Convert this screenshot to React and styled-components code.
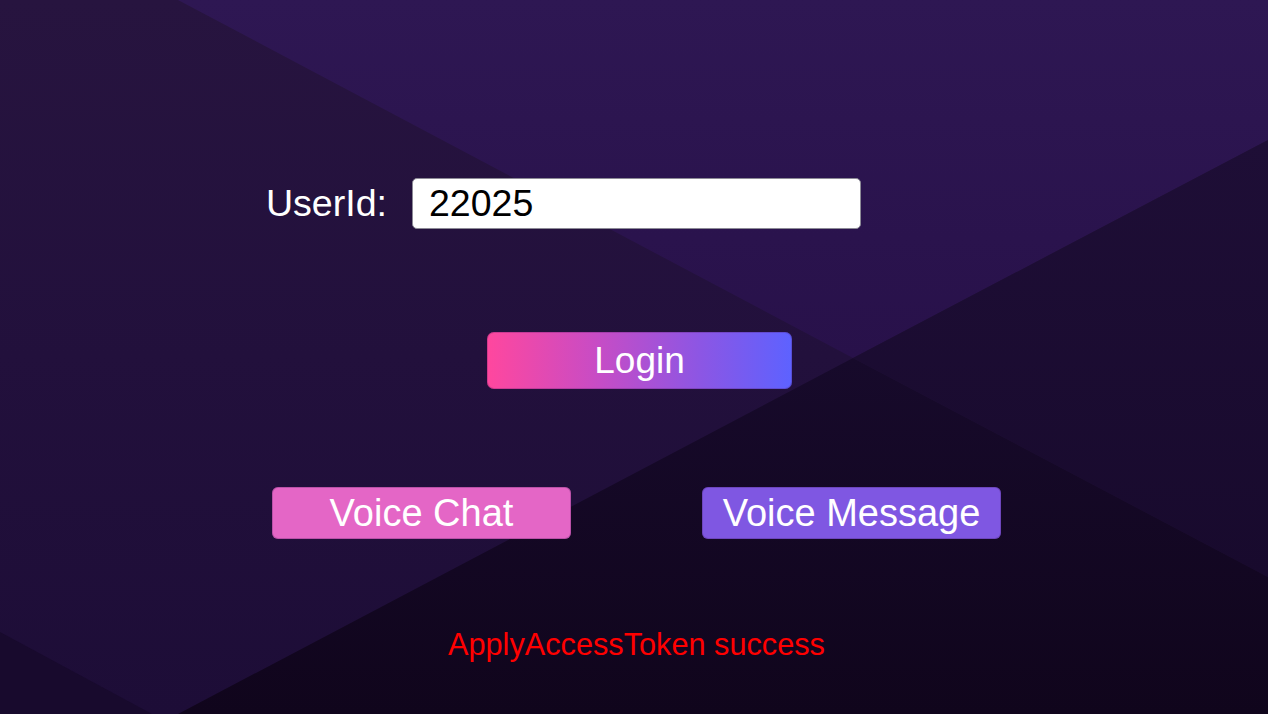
import React from "react";
import styled, { createGlobalStyle } from "styled-components";

const GlobalStyle = createGlobalStyle`
  html, body { margin: 0; padding: 0; }
  body {
    background: #1d0e36;
    font-family: "Liberation Sans", Arial, sans-serif;
    overflow: hidden;
  }
  * { box-sizing: border-box; }
`;

const Stage = styled.div`
  display: grid;
  width: 100vw;
  height: 100vh;
  overflow: hidden;
`;

const Backdrop = styled.svg`
  grid-area: 1 / 1;
  width: 100%;
  height: 100%;
  display: block;
`;

const Content = styled.main`
  grid-area: 1 / 1;
  display: flex;
  flex-direction: column;
  align-items: center;
  padding-top: 178px;
  padding-left: 5px;
  font-family: "Liberation Sans", Arial, sans-serif;
  z-index: 1;
`;

const UserRow = styled.div`
  width: 100%;
  display: grid;
  grid-template-columns: 1fr 449px 1fr;
  align-items: center;
`;

const Label = styled.label`
  justify-self: end;
  margin-right: 25px;
  color: #ffffff;
  font-size: 37.6px;
  line-height: 1;
`;

const Input = styled.input`
  width: 449px;
  height: 51px;
  border: 1px solid #8c8a96;
  border-radius: 5px;
  background: #ffffff;
  color: #000000;
  font-family: "Liberation Sans", Arial, sans-serif;
  font-size: 37.5px;
  padding: 0 16px;
  outline: none;
`;

const LoginButton = styled.button`
  margin-top: 103px;
  margin-left: 6px;
  width: 305px;
  height: 57px;
  border: none;
  border-radius: 7px;
  background: linear-gradient(90deg, #ff479e 0%, #c94cc4 35%, #8c56e4 70%, #5d62ff 100%);
  box-shadow: inset 0 0 0 1px rgba(80, 20, 90, 0.25);
  color: #ffffff;
  font-family: "Liberation Sans", Arial, sans-serif;
  font-size: 37px;
  display: flex;
  align-items: center;
  justify-content: center;
  padding: 0;
  cursor: pointer;
`;

const ActionRow = styled.div`
  margin-top: 98px;
  display: flex;
  gap: 131px;
`;

const ActionButton = styled.button`
  width: 299px;
  height: 52px;
  border: none;
  border-radius: 6px;
  background: ${(p) => p.$color};
  box-shadow: inset 0 0 0 1px rgba(60, 20, 80, 0.25);
  color: #ffffff;
  font-family: "Liberation Sans", Arial, sans-serif;
  font-size: 38px;
  display: flex;
  align-items: center;
  justify-content: center;
  padding: 0;
  cursor: pointer;
`;

const Status = styled.p`
  margin: 89px 0 0;
  color: #ff0000;
  font-size: 30.7px;
  line-height: 34px;
`;

function Background() {
  return (
    <Backdrop viewBox="0 0 1268 714" preserveAspectRatio="none" aria-hidden="true">
      <defs>
        <linearGradient id="gA" x1="0" y1="0" x2="0" y2="1">
          <stop offset="0" stopColor="#2e1753" />
          <stop offset="1" stopColor="#28114a" />
        </linearGradient>
        <linearGradient id="gB" x1="0" y1="0" x2="0" y2="1">
          <stop offset="0" stopColor="#27143f" />
          <stop offset="0.5" stopColor="#22103c" />
          <stop offset="1" stopColor="#1d0d37" />
        </linearGradient>
        <linearGradient id="gD" x1="0" y1="0" x2="0" y2="1">
          <stop offset="0" stopColor="#1e0e36" />
          <stop offset="1" stopColor="#180a2d" />
        </linearGradient>
        <linearGradient id="gE" x1="0" y1="0" x2="0" y2="1">
          <stop offset="0" stopColor="#170a2b" />
          <stop offset="1" stopColor="#10051c" />
        </linearGradient>
      </defs>
      <rect x="0" y="0" width="1268" height="714" fill="url(#gB)" />
      <polygon points="178,0 1268,0 1268,140 853,358" fill="url(#gA)" />
      <polygon points="853,358 1268,140 1268,577" fill="url(#gD)" />
      <polygon points="853,358 1268,577 1268,714 178,714" fill="url(#gE)" />
      <polygon points="0,632 152,714 0,714" fill="#180a2d" />
    </Backdrop>
  );
}

export default function App() {
  return (
    <>
      <GlobalStyle />
      <Stage>
        <Background />
        <Content>
          <UserRow>
            <Label htmlFor="userId">UserId:</Label>
            <Input id="userId" defaultValue="22025" />
          </UserRow>
          <LoginButton>Login</LoginButton>
          <ActionRow>
            <ActionButton $color="#e466c6">Voice Chat</ActionButton>
            <ActionButton $color="#7f57e2">Voice Message</ActionButton>
          </ActionRow>
          <Status>ApplyAccessToken success</Status>
        </Content>
      </Stage>
    </>
  );
}
